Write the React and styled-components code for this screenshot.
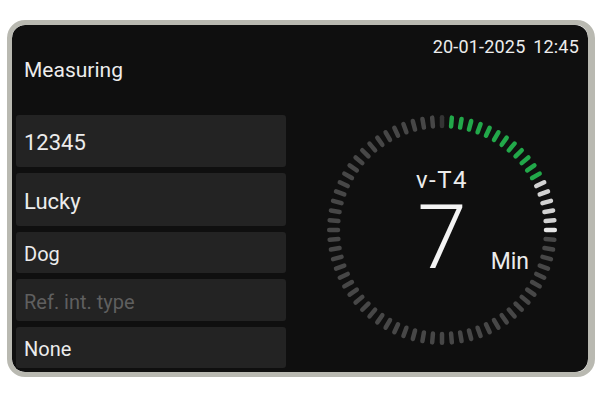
import styled, { createGlobalStyle } from "styled-components";

const GlobalStyle = createGlobalStyle`
  body {
    margin: 0;
    background: #ffffff;
    font-family: Roboto, "Liberation Sans", sans-serif;
  }
`;

const Page = styled.div`
  padding: 20px 0 0 7px;
`;

const Frame = styled.div`
  box-sizing: border-box;
  width: 588px;
  height: 357px;
  border-style: solid;
  border-color: #b9b9b1;
  border-width: 5px 7px 5px 5px;
  border-radius: 18px;
  overflow: hidden;
`;

const Screen = styled.div`
  height: 100%;
  background: #0f0f0f;
  border-radius: 13px;
  display: grid;
  grid-template-columns: 274px 1fr;
  color: #ececec;
`;

const LeftPane = styled.div`
  display: flex;
  flex-direction: column;
  padding-left: 4px;
`;

const Title = styled.div`
  margin: 33px 0 33px 8px;
  font-size: 21px;
  line-height: 24px;
`;

const FieldList = styled.div`
  display: flex;
  flex-direction: column;
  gap: 6px;
`;

const Field = styled.div`
  box-sizing: border-box;
  height: ${(p) => p.$h}px;
  display: flex;
  align-items: center;
  padding: 3px 0 0 8px;
  background: #232323;
  border-radius: 3px;
  font-size: ${(p) => p.$size}px;
  color: ${(p) => (p.$muted ? "#5f5f5f" : "#ececec")};
`;

const RightPane = styled.div`
  display: flex;
  flex-direction: column;
  padding: 11px 0 0 10px;
`;

const DateLine = styled.div`
  align-self: flex-end;
  margin-right: 9px;
  font-size: 18px;
  line-height: 22px;
  word-spacing: 3px;
  letter-spacing: 0.2px;
`;

const Dial = styled.div`
  position: relative;
  align-self: center;
  width: 240px;
  height: 240px;
  margin-top: 52px;
`;

const Readout = styled.div`
  position: absolute;
  inset: 0;
  display: flex;
  flex-direction: column;
  align-items: center;
  padding-top: 56px;
`;

const Mode = styled.div`
  font-size: 24px;
  line-height: 28px;
  letter-spacing: 1.5px;
`;

const Value = styled.div`
  position: relative;
  font-size: 89px;
  line-height: 88px;
  font-weight: 300;
  color: #f4f4f4;
`;

const Unit = styled.span`
  position: absolute;
  left: calc(100% + 24px);
  top: 56px;
  font-size: 23px;
  line-height: 23px;
  font-weight: 400;
  color: #ececec;
`;

const fields = [
  { text: "12345", h: 52, size: 22 },
  { text: "Lucky", h: 53, size: 22 },
  { text: "Dog", h: 41, size: 20 },
  { text: "Ref. int. type", h: 42, size: 20, muted: true },
  { text: "None", h: 41, size: 20 },
];

function tickColor(i) {
  if (i === 0) return "#343434";
  if (i <= 12) return "#22a84a";
  if (i <= 18) return i === 18 ? "#e6e6e6" : "#d2d2d2";
  return "#474747";
}

function TickRing() {
  const ticks = [];
  for (let i = 0; i < 72; i++) {
    const a = (i * 5 * Math.PI) / 180;
    const s = Math.sin(a);
    const c = Math.cos(a);
    ticks.push(
      <line
        key={i}
        x1={120 + s * 104}
        y1={120 - c * 104}
        x2={120 + s * 112.8}
        y2={120 - c * 112.8}
        stroke={tickColor(i)}
        strokeWidth="4.5"
        strokeLinecap="round"
      />
    );
  }
  return (
    <svg width="240" height="240" viewBox="0 0 240 240">
      {ticks}
    </svg>
  );
}

export default function App() {
  return (
    <Page>
      <GlobalStyle />
      <Frame>
        <Screen>
          <LeftPane>
            <Title>Measuring</Title>
            <FieldList>
              {fields.map((f) => (
                <Field key={f.text} $h={f.h} $size={f.size} $muted={f.muted}>
                  {f.text}
                </Field>
              ))}
            </FieldList>
          </LeftPane>
          <RightPane>
            <DateLine>20-01-2025 12:45</DateLine>
            <Dial>
              <TickRing />
              <Readout>
                <Mode>v-T4</Mode>
                <Value>
                  7<Unit>Min</Unit>
                </Value>
              </Readout>
            </Dial>
          </RightPane>
        </Screen>
      </Frame>
    </Page>
  );
}
